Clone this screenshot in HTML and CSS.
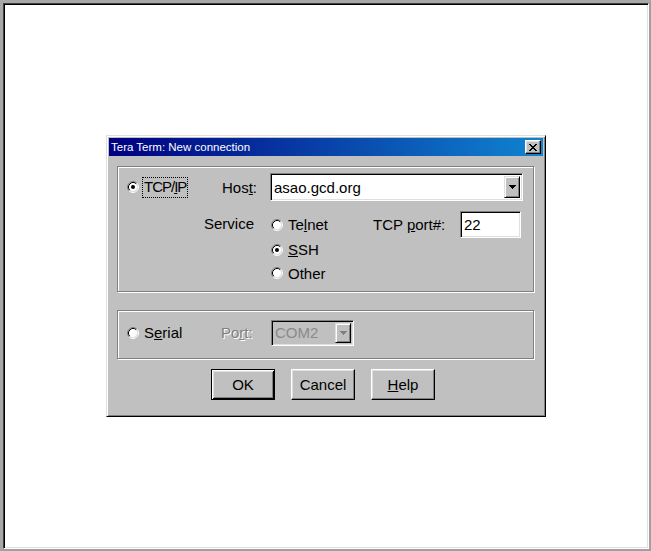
FILE: index.html
```html
<!DOCTYPE html>
<html>
<head>
<meta charset="utf-8">
<title>Tera Term: New connection</title>
<link rel="stylesheet" href="styles.css">
</head>
<body>
<svg class="defs" width="0" height="0">
  <defs>
    <symbol id="radio" viewBox="0 0 12 12">
      <circle cx="6" cy="6" r="4.5" fill="#fff"/>
      <path d="M2.11 9.89A5.5 5.5 0 0 1 9.89 2.11" stroke="#808080" fill="none"/>
      <path d="M9.89 2.11A5.5 5.5 0 0 1 2.11 9.89" stroke="#fff" fill="none"/>
      <path d="M2.82 9.18A4.5 4.5 0 0 1 9.18 2.82" stroke="#000" fill="none"/>
      <path d="M9.18 2.82A4.5 4.5 0 0 1 2.82 9.18" stroke="#dfdfdf" fill="none"/>
    </symbol>
    <symbol id="arrow" viewBox="0 0 7 4">
      <path d="M0 0h7v1h-1v1h-1v1h-1v1h-1v-1h-1v-1h-1v-1h-1z"/>
    </symbol>
  </defs>
</svg>
<div class="screen">
  <div class="desk">
    <div class="dialog">
      <div class="titlebar">
        <span class="title">Tera Term: New connection</span>
        <span class="close"><svg width="8" height="7" viewBox="0 0 8 7" shape-rendering="crispEdges"><path d="M0 0h2v1h1v1h2V1h1V0h2v1h-1v1h-1v1h-1v1h1v1h1v1h1v1H6V6H5V5H3v1H2v1H0V6h1V5h1V4h1V3H2V2H1V1H0z" fill="#000"/></svg></span>
      </div>

      <div class="group tcp">
        <div class="opt tcpip">
          <svg class="radio" width="12" height="12"><use href="#radio"/><circle cx="6" cy="6" r="2" fill="#000"/></svg>
          <span class="focus">TCP/<u>I</u>P</span>
        </div>
        <div class="lbl host">Hos<u>t</u>:</div>
        <div class="combo hostbox">
          <span class="value">asao.gcd.org</span>
          <span class="dd"><svg width="7" height="4"><use href="#arrow"/></svg></span>
        </div>

        <div class="lbl service">Service</div>
        <div class="opt svc telnet">
          <svg class="radio" width="12" height="12"><use href="#radio"/></svg>
          <span>Te<u>l</u>net</span>
        </div>
        <div class="opt svc ssh">
          <svg class="radio" width="12" height="12"><use href="#radio"/><circle cx="6" cy="6" r="2" fill="#000"/></svg>
          <span><u>S</u>SH</span>
        </div>
        <div class="opt svc other">
          <svg class="radio" width="12" height="12"><use href="#radio"/></svg>
          <span>Other</span>
        </div>
        <div class="lbl portlabel">TCP <u>p</u>ort#:</div>
        <div class="field portfield">22</div>
      </div>

      <div class="group serialgrp">
        <div class="opt serial">
          <svg class="radio" width="12" height="12"><use href="#radio"/></svg>
          <span>S<u>e</u>rial</span>
        </div>
        <div class="lbl disabled portlbl">Po<u>r</u>t:</div>
        <div class="combo off">
          <span class="value">COM2</span>
          <span class="dd"><svg width="7" height="4"><use href="#arrow"/></svg></span>
        </div>
      </div>

      <div class="buttons">
        <div class="btn default">OK</div>
        <div class="btn">Cancel</div>
        <div class="btn"><span><u>H</u>elp</span></div>
      </div>
    </div>
  </div>
</div>
</body>
</html>
```

FILE: styles.css
```css
* { box-sizing: border-box; }

html, body {
  margin: 0;
  padding: 0;
}

body {
  width: 651px;
  height: 551px;
  font-family: "Liberation Sans", Arial, sans-serif;
  font-size: 15px;
  color: #000;
  background: #a0a0a0;
}

.defs {
  position: absolute;
  width: 0;
  height: 0;
}

.screen {
  width: 651px;
  height: 551px;
  border-style: solid;
  border-width: 3px 2px 2px 3px;
  border-color: #a8a8a8 #a0a0a0 #a0a0a0 #a8a8a8;
}

.desk {
  height: 100%;
  background: #fff;
  border: 1px solid;
  border-color: #404040 #fff #fff #404040;
  box-shadow: inset 1px 1px 0 #000, inset -1px -1px 0 #dfdfdf;
  display: flex;
  align-items: center;
  justify-content: center;
}

.dialog {
  width: 440px;
  height: 282px;
  background: #c0c0c0;
  border: 1px solid;
  border-color: #dfdfdf #000 #000 #dfdfdf;
  box-shadow: inset 1px 1px 0 #fff, inset -1px -1px 0 #808080;
  padding: 2px;
}

.titlebar {
  height: 18px;
  background: linear-gradient(to right, #000080, #1084d0);
  display: flex;
  align-items: center;
  justify-content: space-between;
  padding: 0 2px 0 2px;
}

.title {
  color: #fff;
  font-size: 11.5px;
  line-height: 14px;
}

.close {
  width: 16px;
  height: 14px;
  background: #c0c0c0;
  border: 1px solid;
  border-color: #fff #000 #000 #fff;
  box-shadow: inset -1px -1px 0 #808080, inset 1px 1px 0 #dfdfdf;
  display: flex;
  align-items: center;
  justify-content: center;
  padding-right: 1px;
}

.close svg { display: block; }

.group {
  border: 1px solid #808080;
  box-shadow: 1px 1px 0 #fff, inset 1px 1px 0 #fff;
  margin: 0 9px 0 8px;
}

.tcp {
  margin-top: 10px;
  display: grid;
  grid-template-columns: 77px 66px 103px 87px 63px;
  grid-template-rows: 28px 10px 27px 23px 24px;
  align-items: center;
  padding: 6px 0 6px 9px;
}

.opt {
  display: flex;
  align-items: center;
  gap: 5px;
  white-space: nowrap;
}

.radio {
  display: block;
  flex: none;
}

.tcpip {
  grid-row: 1;
  grid-column: 1;
  gap: 3px;
}

.focus {
  border: 1px dotted #000;
  padding: 1px 1px 2px 1px;
  line-height: 16px;
  letter-spacing: -1px;
}

.lbl { white-space: nowrap; }

.host {
  grid-row: 1;
  grid-column: 2;
  padding-left: 18px;
}

.hostbox {
  grid-row: 1;
  grid-column: 3 / 6;
  height: 28px;
}

.service {
  grid-row: 3;
  grid-column: 2;
  margin-top: -3px;
}

.svc {
  grid-column: 3;
  padding-left: 1px;
}

.telnet { grid-row: 3; }
.ssh { grid-row: 4; }
.other { grid-row: 5; }

.portlabel {
  grid-row: 3;
  grid-column: 4;
}

.portfield {
  grid-row: 3;
  grid-column: 5;
}

.combo {
  display: flex;
  align-items: center;
  background: #fff;
  border: 1px solid;
  border-color: #808080 #fff #fff #808080;
  box-shadow: inset 1px 1px 0 #000, inset -1px -1px 0 #dfdfdf;
  padding: 2px;
}

.combo .value {
  flex: 1;
  padding-left: 1px;
}

.dd {
  width: 16px;
  align-self: stretch;
  background: #c0c0c0;
  border: 1px solid;
  border-color: #dfdfdf #000 #000 #dfdfdf;
  box-shadow: inset 1px 1px 0 #fff, inset -1px -1px 0 #808080;
  display: flex;
  align-items: center;
  justify-content: center;
}

.dd svg { display: block; fill: #000; }

.field {
  width: 61px;
  height: 27px;
  background: #fff;
  border: 1px solid;
  border-color: #808080 #fff #fff #808080;
  box-shadow: inset 1px 1px 0 #000, inset -1px -1px 0 #dfdfdf;
  padding: 0 0 0 3px;
  display: flex;
  align-items: center;
}

.serialgrp {
  margin-top: 18px;
  height: 49px;
  display: flex;
  align-items: center;
  padding: 0 0 4px 9px;
}

.serial {
  width: 94px;
}

.disabled {
  color: #808080;
  text-shadow: 1px 1px 0 #fff;
}

.portlbl {
  width: 50px;
}

.combo.off {
  width: 83px;
  height: 26px;
  background: #c0c0c0;
  color: #8a8a8a;
}

.combo.off .dd svg { fill: #808080; }

.buttons {
  display: flex;
  justify-content: center;
  gap: 16px;
  margin-top: 10px;
  padding-right: 6px;
}

.btn {
  width: 64px;
  height: 31px;
  display: flex;
  align-items: center;
  justify-content: center;
  border: 1px solid;
  border-color: #fff #000 #000 #fff;
  box-shadow: inset -1px -1px 0 #808080, inset 1px 1px 0 #dfdfdf;
}

.btn.default {
  border-color: #000;
  box-shadow: inset 1px 1px 0 #fff, inset -1px -1px 0 #000, inset 2px 2px 0 #dfdfdf, inset -2px -2px 0 #808080;
}
```
